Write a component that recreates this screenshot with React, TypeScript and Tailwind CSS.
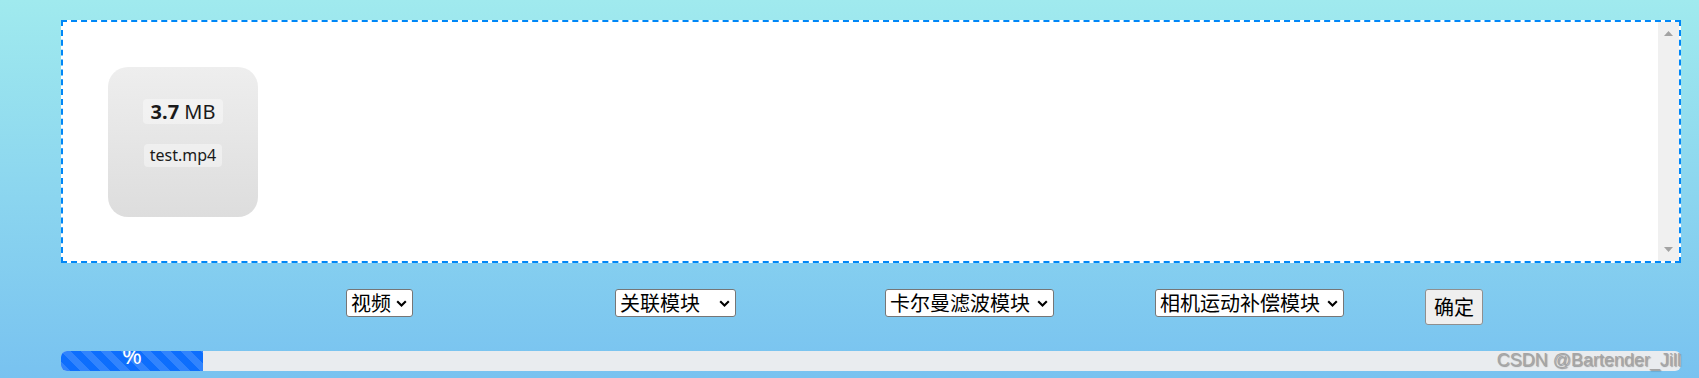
import { useState } from "react";

const cjk = "font-['Microsoft_YaHei','Noto_Sans_CJK_SC',sans-serif]";

function Chevron() {
  return (
    <svg width="11" height="7" viewBox="0 0 11 7" className="shrink-0">
      <path d="M1.2 1.2l4.3 4.3 4.3-4.3" fill="none" stroke="#000" strokeWidth="2.1" />
    </svg>
  );
}

function Dropdown({
  width,
  options,
}: {
  width: string;
  options: string[];
}) {
  const [value, setValue] = useState(options[0]);
  return (
    <div
      className={`flex h-[28px] items-center rounded-[3px] border border-[#767676] bg-white pr-[5px] ${width}`}
    >
      <select
        value={value}
        onChange={(e) => setValue(e.target.value)}
        className={`h-full min-w-0 flex-1 appearance-none bg-transparent pl-[4px] text-[20px] leading-[26px] text-black outline-none ${cjk}`}
      >
        {options.map((o) => (
          <option key={o} value={o}>
            {o}
          </option>
        ))}
      </select>
      <Chevron />
    </div>
  );
}

function FileCard() {
  return (
    <div className="flex h-[150px] w-[150px] flex-col items-center gap-[20px] rounded-[20px] bg-[linear-gradient(to_bottom,#eeeeee,#dddddd)] pt-[32px] font-['Noto_Sans',sans-serif] text-[#1a1a1a]">
      <span className="h-[25px] rounded-[4px] bg-white/40 px-[8px] text-[20px] leading-[25px]">
        <strong className="font-bold">3.7</strong> MB
      </span>
      <span className="h-[23px] rounded-[4px] bg-white/40 px-[6px] text-[16px] leading-[23px]">
        test.mp4
      </span>
    </div>
  );
}

export default function App() {
  return (
    <div className="relative h-[378px] w-full overflow-hidden bg-[linear-gradient(to_bottom,#a0eaee,#78c2f0)] pt-[20px]">
      {/* drop zone */}
      <div className="ml-[61px] flex h-[243px] w-[1620px] border-2 border-dashed border-[#0087f7] bg-white">
        <div className="flex-1 p-[45px]">
          <FileCard />
        </div>
        <div className="flex w-[21px] flex-col items-center justify-between bg-[#f0f0f0] pt-[9px] pb-[9px]">
          <svg width="9" height="5" viewBox="0 0 9 5">
            <path d="M0 5L4.5 0 9 5z" fill="#a3a3a3" />
          </svg>
          <svg width="9" height="5" viewBox="0 0 9 5">
            <path d="M0 0L4.5 5 9 0z" fill="#a3a3a3" />
          </svg>
        </div>
      </div>

      {/* module pickers */}
      <div className="mt-[26px] ml-[346px] flex items-start">
        <div className="w-[269px]">
          <Dropdown width="w-[67px]" options={["视频", "图片"]} />
        </div>
        <div className="w-[270px]">
          <Dropdown width="w-[121px]" options={["关联模块"]} />
        </div>
        <div className="w-[270px]">
          <Dropdown width="w-[169px]" options={["卡尔曼滤波模块"]} />
        </div>
        <div className="w-[270px]">
          <Dropdown width="w-[189px]" options={["相机运动补偿模块"]} />
        </div>
        <button
          type="button"
          className={`h-[36px] w-[58px] rounded-[3px] border border-[#8f8f8f] bg-[#efefef] text-[20px] leading-[26px] text-black ${cjk}`}
        >
          确定
        </button>
      </div>

      {/* progress */}
      <div className="mt-[26px] ml-[61px] flex h-[20px] w-[1620px] overflow-hidden rounded-[6px] bg-[#e9ecef]">
        <div className="flex w-[142px] justify-center overflow-hidden bg-[#0d6efd] bg-[linear-gradient(45deg,rgba(255,255,255,.15)_25%,transparent_25%,transparent_50%,rgba(255,255,255,.15)_50%,rgba(255,255,255,.15)_75%,transparent_75%,transparent)] bg-[length:20px_20px]">
          <span className="-mt-[8px] font-['Noto_Sans',sans-serif] text-[24px] leading-[24px] text-white">
            %
          </span>
        </div>
      </div>

      <span className="absolute top-[351px] right-[18px] font-['Liberation_Sans',Arial,sans-serif] text-[18px] leading-none text-[#a5a5a5] [text-shadow:1px_1px_1px_rgba(0,0,0,0.35)]">
        CSDN @Bartender_Jill
      </span>
    </div>
  );
}
